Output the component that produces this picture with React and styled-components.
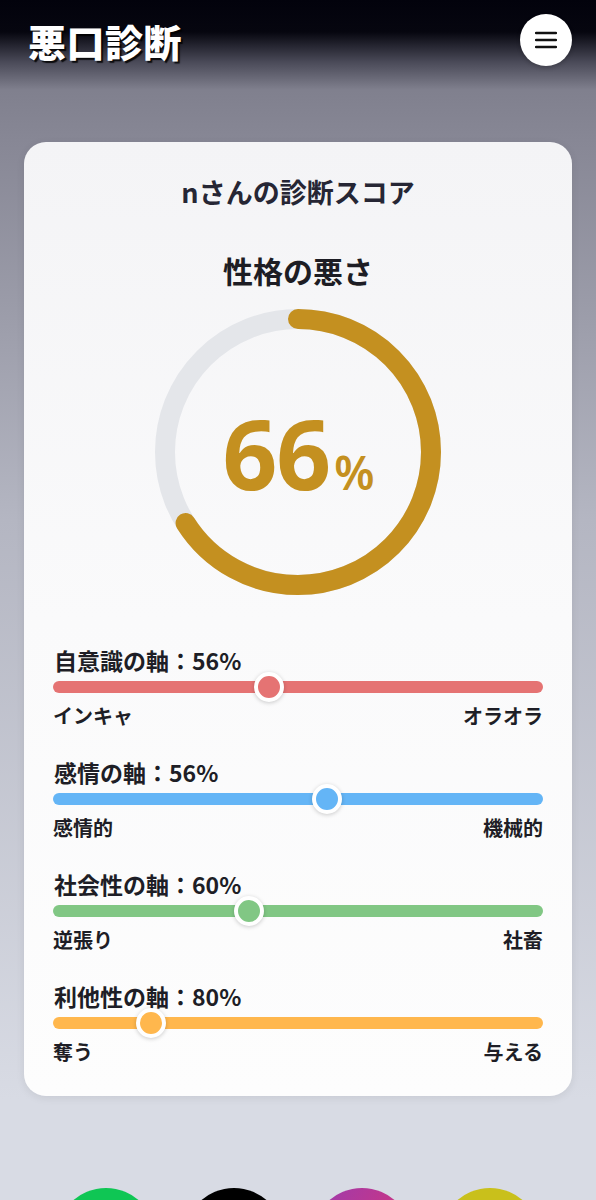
import React from "react";
import styled, { createGlobalStyle } from "styled-components";

const GlobalStyle = createGlobalStyle`
  html, body {
    margin: 0;
    padding: 0;
  }
  body {
    font-family: "Noto Sans CJK JP", "Noto Sans", sans-serif;
    background: #d8dbe4;
  }
`;

const axes = [
  { label: "自意識の軸", value: 56, pos: 44, left: "インキャ", right: "オラオラ", color: "#e57373" },
  { label: "感情の軸", value: 56, pos: 56, left: "感情的", right: "機械的", color: "#64b5f6" },
  { label: "社会性の軸", value: 60, pos: 40, left: "逆張り", right: "社畜", color: "#81c784" },
  { label: "利他性の軸", value: 80, pos: 20, left: "奪う", right: "与える", color: "#ffb74d" },
];

const shares = [
  { bg: "#0fc654" },
  { bg: "#000000" },
  { bg: "linear-gradient(120deg, #9b3bb0 0%, #e2336d 100%)" },
  { bg: "#c9c01b" },
];

const App = () => {
  const score = 66;
  const r = 133;
  const circ = 2 * Math.PI * r;

  return (
    <Page>
      <GlobalStyle />
      <Header>
        <Logo>悪口診断</Logo>
        <MenuButton aria-label="menu">
          <svg width="22" height="18" viewBox="0 0 22 18">
            <path d="M1 2h20M1 9h20M1 16h20" stroke="#111" strokeWidth="2.4" strokeLinecap="round" />
          </svg>
        </MenuButton>
      </Header>

      <Card>
        <CardTitle>nさんの診断スコア</CardTitle>
        <ScoreTitle>性格の悪さ</ScoreTitle>

        <Ring>
          <svg width="296" height="296" viewBox="0 0 296 296">
            <circle cx="148" cy="148" r={r} fill="none" stroke="#e4e6ea" strokeWidth="20" />
            <circle
              cx="148"
              cy="148"
              r={r}
              fill="none"
              stroke="#c49020"
              strokeWidth="20"
              strokeLinecap="round"
              strokeDasharray={`${(circ * score) / 100} ${circ}`}
              transform="rotate(-90 148 148)"
            />
          </svg>
          <ScoreText>
            {score}
            <small>%</small>
          </ScoreText>
        </Ring>

        <Axes>
          {axes.map((a) => (
            <Axis key={a.label}>
              <AxisLabel>
                {a.label}：{a.value}%
              </AxisLabel>
              <Track $color={a.color}>
                <Thumb $color={a.color} style={{ left: `${a.pos}%` }} />
              </Track>
              <Ends>
                <span>{a.left}</span>
                <span>{a.right}</span>
              </Ends>
            </Axis>
          ))}
        </Axes>
      </Card>

      <Shares>
        {shares.map((s, i) => (
          <ShareButton key={i} $bg={s.bg} />
        ))}
      </Shares>
    </Page>
  );
};

const Page = styled.div`
  height: 1200px;
  overflow: hidden;
  background: linear-gradient(
    to bottom,
    #02020c 0px,
    #06060f 32px,
    #4a4a58 62px,
    #80808e 90px,
    #878795 140px,
    #b4b6c2 520px,
    #d8dbe4 1100px
  );
`;

const Header = styled.header`
  display: flex;
  align-items: center;
  justify-content: space-between;
  height: 52px;
  padding: 14px 24px 0 28px;
`;

const Logo = styled.h1`
  margin: 0;
  color: #fff;
  font-size: 38px;
  font-weight: 900;
  letter-spacing: 0.5px;
  text-shadow: 2px 2px 1px rgba(0, 0, 0, 0.85);
`;

const MenuButton = styled.button`
  width: 52px;
  height: 52px;
  border: none;
  border-radius: 50%;
  background: #fff;
  display: flex;
  align-items: center;
  justify-content: center;
  padding: 0;
  box-shadow: 0 2px 4px rgba(0, 0, 0, 0.2);
`;

const Card = styled.section`
  margin: 76px 24px 0;
  padding: 32px 29px 30px;
  border-radius: 22px;
  background: linear-gradient(to bottom, #f4f4f6 0%, #fafafb 50%, #fdfdfd 100%);
  box-shadow: 0 2px 8px rgba(0, 0, 0, 0.08);
`;

const CardTitle = styled.h2`
  margin: 0;
  text-align: center;
  font-size: 27px;
  line-height: 36px;
  font-weight: 700;
  color: #262634;
`;

const ScoreTitle = styled.h3`
  margin: 40px 0 0;
  text-align: center;
  font-size: 30px;
  line-height: 40px;
  font-weight: 700;
  color: #1d1d24;
`;

const Ring = styled.div`
  position: relative;
  width: 296px;
  height: 296px;
  margin: 14px auto 0;

  svg {
    display: block;
  }
`;

const ScoreText = styled.div`
  position: absolute;
  inset: 0;
  display: flex;
  align-items: baseline;
  justify-content: center;
  padding-top: 101px;
  box-sizing: border-box;
  color: #c49020;
  font-family: "Noto Sans", sans-serif;
  font-weight: 700;
  font-size: 96px;
  line-height: 96px;
  letter-spacing: -1px;

  small {
    font-size: 46px;
    margin-left: 4px;
    font-weight: 600;
  }
`;

const Axes = styled.div`
  display: flex;
  flex-direction: column;
  gap: 27px;
  margin-top: 45px;
`;

const Axis = styled.div`
  display: flex;
  flex-direction: column;
`;

const AxisLabel = styled.div`
  font-size: 23px;
  line-height: 30px;
  font-weight: 700;
  color: #1e1e26;
  padding-left: 1px;
`;

const Track = styled.div`
  position: relative;
  height: 12px;
  margin-top: 6px;
  border-radius: 6px;
  background: ${({ $color }) => $color};
`;

const Thumb = styled.span`
  position: absolute;
  top: 50%;
  width: 22px;
  height: 22px;
  border-radius: 50%;
  background: ${({ $color }) => $color};
  border: 4px solid #fff;
  transform: translate(-50%, -50%);
  box-shadow: 0 1px 4px rgba(0, 0, 0, 0.2);
`;

const Ends = styled.div`
  display: flex;
  justify-content: space-between;
  margin-top: 9px;
  font-size: 20px;
  line-height: 28px;
  font-weight: 700;
  color: #1e1e26;
`;

const Shares = styled.div`
  display: flex;
  justify-content: center;
  gap: 28px;
  margin-top: 92px;
`;

const ShareButton = styled.div`
  width: 100px;
  height: 100px;
  border-radius: 50%;
  background: ${({ $bg }) => $bg};
  flex-shrink: 0;
`;

export default App;
